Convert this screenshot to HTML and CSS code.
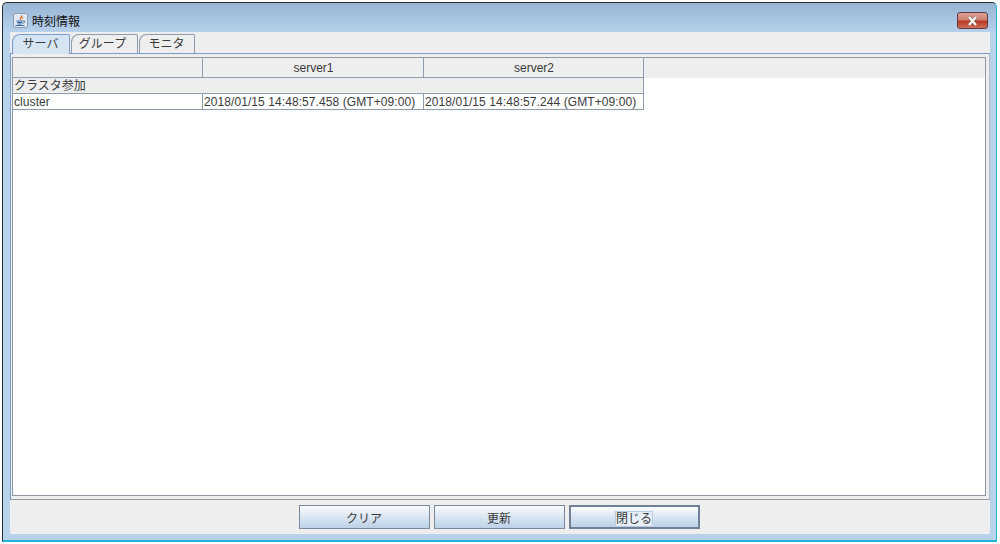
FILE: index.html
```html
<!DOCTYPE html>
<html lang="ja">
<head>
    <meta charset="UTF-8">
    <title>時刻情報</title>
    <link rel="stylesheet" href="styles.css">
</head>
<body>
    <div class="window">
        <div class="title_bar">
            <svg class="app_icon" width="15" height="15" viewBox="0 0 15 15">
                <rect x="0.5" y="0.5" width="14" height="14" rx="1.5" fill="#dfe8f3" stroke="#8b9db5"/>
                <path d="M8.5 1.5 C9.5 3 6 4 7 6.5 L8 7 C7.5 5 10.5 4 8.5 1.5 Z" fill="#e0661a"/>
                <path d="M10.5 3 C9 4 8.5 5.5 9.2 7 L10 6.5 C9.5 5.5 10 4.5 10.5 3 Z" fill="#ee9a3c"/>
                <path d="M3.5 8 H9.5 M4 9.5 H9 M4.5 11 H8.5" stroke="#35699f" stroke-width="1" fill="none"/>
                <path d="M9.5 8 H11.5 V9.5 L9 10.5" stroke="#35699f" stroke-width="0.8" fill="none"/>
                <path d="M2.5 12.5 H11.5" stroke="#35699f" stroke-width="1"/>
            </svg>
            <span class="title_txt">時刻情報</span>
            <button class="btn_close" type="button">
                <svg width="13" height="10" viewBox="0 0 13 10">
                    <path d="M3 1 L10 9 M10 1 L3 9" stroke="#5d4a50" stroke-width="3.6" fill="none" opacity="0.5"/>
                    <path d="M3 1 L10 9 M10 1 L3 9" stroke="#f6f6f6" stroke-width="2.4" fill="none"/>
                </svg>
            </button>
        </div>
        <div class="content">
            <ul class="tabs">
                <li class="tab tab_server active">サーバ</li>
                <li class="tab tab_group">グループ</li>
                <li class="tab tab_monitor">モニタ</li>
            </ul>
            <div class="tab_panel">
                <div class="table_box">
                    <div class="head_row">
                        <div class="cell col_name"></div>
                        <div class="cell col_a center">server1</div>
                        <div class="cell col_b center">server2</div>
                        <div class="cell_rest"></div>
                    </div>
                    <div class="group_row">クラスタ参加</div>
                    <div class="data_row">
                        <div class="cell col_name">cluster</div>
                        <div class="cell col_a">2018/01/15 14:48:57.458 (GMT+09:00)</div>
                        <div class="cell col_b">2018/01/15 14:48:57.244 (GMT+09:00)</div>
                    </div>
                </div>
            </div>
            <div class="btn_row">
                <button class="btn" type="button">クリア</button>
                <button class="btn" type="button">更新</button>
                <button class="btn btn_focus" type="button"><span>閉じる</span></button>
            </div>
        </div>
    </div>
</body>
</html>
```
FILE: styles.css
```css
*{
    margin:0;
    padding:0;
    box-sizing: border-box;
}
html, body{
    width: 1000px;
    height: 544px;
    overflow: hidden;
    background-color: white;
}
body{
    padding: 2px 3px 2px 2px;
    font-family: "Liberation Sans", "Noto Sans CJK JP", sans-serif;
    font-size: 12px;
    color: #3a3a3a;
}
.window{
    width: 995px;
    height: 540px;
    display: flex;
    flex-direction: column;
    border: 1px solid #2b2f33;
    border-bottom: 2px solid #22b4d8;
    border-right: 1px solid #22b4d8;
    border-radius: 5px 5px 0 0;
    padding: 0 6px 6px 7px;
    background: linear-gradient(to bottom, #98b5d5 0, #b8d2ec 30px, #b8d2ec 100%);
}
.title_bar{
    height: 29px;
    flex: none;
    display: flex;
    align-items: center;
    padding-left: 3px;
    padding-top: 5px;
}
.app_icon{
    flex: none;
}
.title_txt{
    margin-left: 4px;
    font-size: 12px;
    color: #111;
}
.btn_close{
    margin-left: auto;
    margin-right: 2px;
    margin-top: 1px;
    width: 31px;
    height: 17px;
    display: flex;
    align-items: center;
    justify-content: center;
    border: 1px solid #5e3a42;
    border-radius: 3px;
    background: linear-gradient(to bottom, #dba497 0, #cf7f6e 45%, #b83a26 55%, #cf6f5b 100%);
}
.content{
    flex: 1;
    display: flex;
    flex-direction: column;
    background-color: #eeeeee;
}
.tabs{
    list-style-type: none;
    display: flex;
    height: 21px;
    padding: 2px 0 0 2px;
    flex: none;
}
.tab{
    height: 19px;
    text-align: center;
    border: 1px solid #8c9cae;
    border-bottom: none;
    border-radius: 8px 2px 0 0;
    background-color: #eeeeee;
    color: #3a3a3a;
    line-height: 19px;
}
.tab_server{
    width: 58px;
    margin-right: 1px;
    padding-right: 1px;
}
.tab_group{
    width: 67px;
    margin-right: 1px;
    padding-right: 4px;
}
.tab_monitor{
    width: 56px;
    padding-right: 1px;
}
.tab.active{
    height: 20px;
    border-color: #7a9ccb;
    background-color: #d6e5f4;
    position: relative;
}
.tab_panel{
    flex: 1;
    border-top: 1px solid #7a9ccb;
    border-left: 1px solid #7a9ccb;
    border-right: 1px solid #b0bccb;
    border-bottom: 1px solid #8f98a3;
    padding: 3px 3px 3px 1px;
    display: flex;
    min-height: 0;
}
.table_box{
    flex: 1;
    border: 1px solid #8f98a3;
    background-color: white;
}
.head_row{
    display: flex;
    height: 20px;
    background-color: #eeeeee;
}
.cell{
    flex: none;
    border-right: 1px solid #8d9cae;
    border-bottom: 1px solid #8d9cae;
    padding-left: 1px;
    white-space: nowrap;
    overflow: hidden;
}
.cell_rest{
    flex: 1;
}
.head_row .cell{
    line-height: 21px;
}
.col_name{
    width: 190px;
}
.col_a{
    width: 221px;
}
.col_b{
    width: 220px;
}
.center{
    text-align: center;
}
.group_row{
    width: 631px;
    height: 16px;
    line-height: 17px;
    padding-left: 1px;
    background-color: #eeeeee;
    border-right: 1px solid #8d9cae;
    border-bottom: 1px solid #8d9cae;
}
.data_row{
    display: flex;
    height: 16px;
}
.data_row .cell{
    line-height: 16px;
    letter-spacing: 0.08px;
    background-color: white;
}
.btn_row{
    flex: none;
    height: 34px;
    display: flex;
    justify-content: center;
    padding: 5px 2px 0 0;
    gap: 4px;
}
.btn{
    width: 131px;
    height: 24px;
    border: 1px solid #7a8a9c;
    background: linear-gradient(to bottom, #fafcfe 0, #dde8f3 45%, #bcd1e6 100%);
    font-family: inherit;
    font-size: 12px;
    color: #3a3a3a;
}
.btn_focus{
    border: 2px solid #6f8196;
}
.btn_focus span{
    outline: 1px solid #b8cce0;
    background-color: #e6eff8;
}
```
